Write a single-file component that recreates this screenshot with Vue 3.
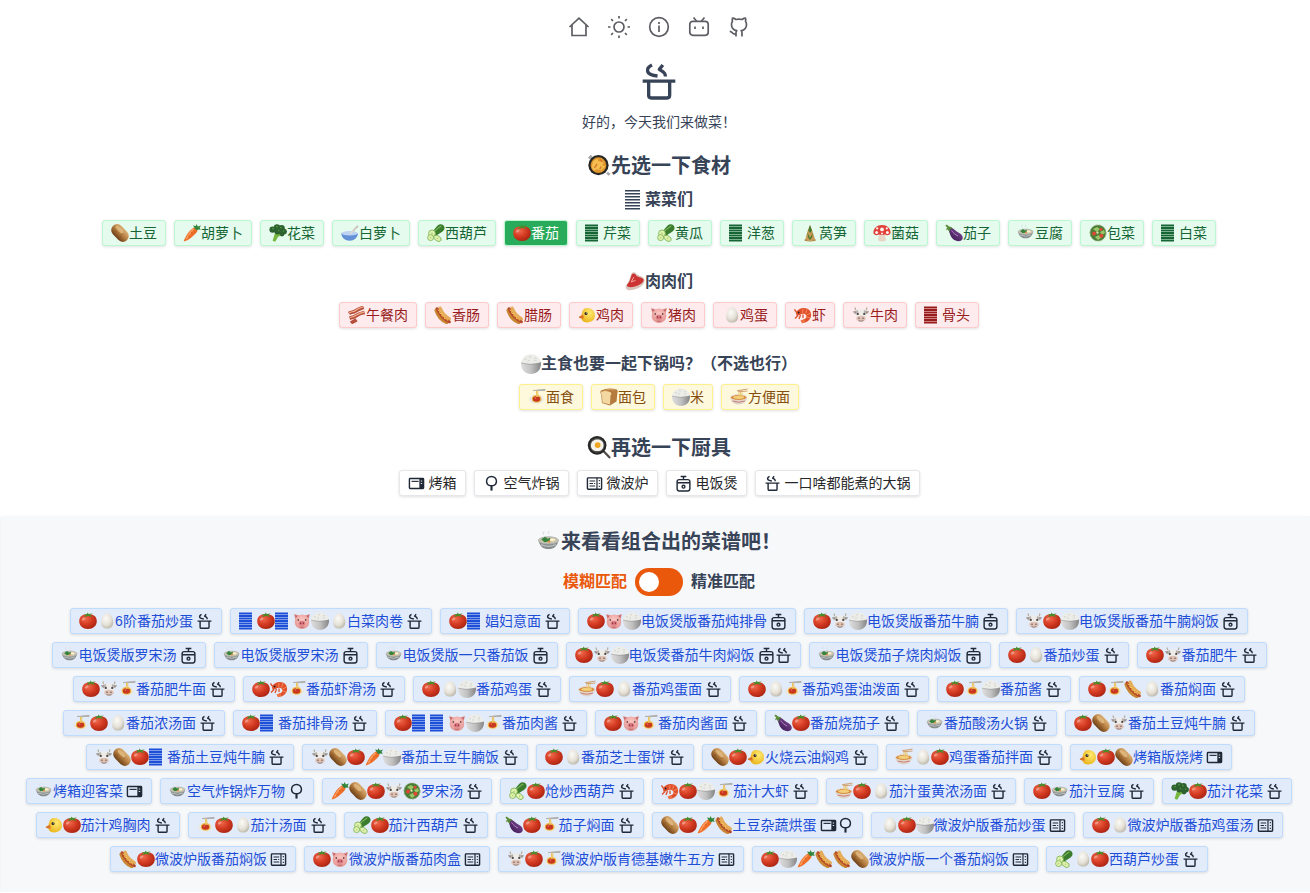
<script setup>
import { ref } from 'vue'

const vegetables = [
  ['potato', '土豆'], ['carrot', '胡萝卜'], ['broccoli', '花菜'], ['spoonbowl', '白萝卜'],
  ['cucumber', '西葫芦'], ['tomato', '番茄'], ['stripe', '芹菜'], ['cucumber', '黄瓜'],
  ['stripe', '洋葱'], ['bamboo', '莴笋'], ['mushroom', '菌菇'], ['eggplant', '茄子'],
  ['soup', '豆腐'], ['salad', '包菜'], ['stripe', '白菜'],
]
const meats = [
  ['bacon', '午餐肉'], ['hotdog', '香肠'], ['hotdog', '腊肠'], ['chick', '鸡肉'], ['pig', '猪肉'],
  ['egg', '鸡蛋'], ['shrimp', '虾'], ['cow', '牛肉'], ['stripe', '骨头'],
]
const staples = [['pasta', '面食'], ['bread', '面包'], ['rice', '米'], ['noodle', '方便面']]
const tools = [
  ['oven', '烤箱'], ['fryer', '空气炸锅'], ['microwave', '微波炉'], ['cooker', '电饭煲'],
  ['pot', '一口啥都能煮的大锅'],
]

const recipes = [
  ['tomato egg', '6阶番茄炒蛋', 'pot'],
  ['stripe tomato stripe pig rice egg', '白菜肉卷', 'pot'],
  ['tomato stripe', '娼妇意面', 'pot'],
  ['tomato pig rice', '电饭煲版番茄炖排骨', 'cooker'],
  ['tomato cow rice', '电饭煲版番茄牛腩', 'cooker'],
  ['cow tomato rice', '电饭煲版番茄牛腩焖饭', 'cooker'],
  ['soup', '电饭煲版罗宋汤', 'cooker'],
  ['soup', '电饭煲版罗宋汤', 'cooker'],
  ['soup', '电饭煲版一只番茄饭', 'cooker'],
  ['tomato cow rice', '电饭煲番茄牛肉焖饭', 'cooker pot'],
  ['soup', '电饭煲茄子烧肉焖饭', 'cooker'],
  ['tomato egg', '番茄炒蛋', 'pot'],
  ['tomato cow', '番茄肥牛', 'pot'],
  ['tomato cow pasta', '番茄肥牛面', 'pot'],
  ['tomato shrimp pasta', '番茄虾滑汤', 'pot'],
  ['tomato egg rice', '番茄鸡蛋', 'pot'],
  ['noodle tomato egg', '番茄鸡蛋面', 'pot'],
  ['tomato egg pasta', '番茄鸡蛋油泼面', 'pot'],
  ['tomato pasta rice', '番茄酱', 'pot'],
  ['tomato pasta hotdog egg', '番茄焖面', 'pot'],
  ['pasta tomato egg', '番茄浓汤面', 'pot'],
  ['tomato stripe', '番茄排骨汤', 'pot'],
  ['tomato stripe stripe pig rice pasta', '番茄肉酱', 'pot'],
  ['tomato pig pasta', '番茄肉酱面', 'pot'],
  ['eggplant tomato', '番茄烧茄子', 'pot'],
  ['soup', '番茄酸汤火锅', 'pot'],
  ['tomato potato cow', '番茄土豆炖牛腩', 'pot'],
  ['cow potato tomato stripe', '番茄土豆炖牛腩', 'pot'],
  ['cow potato tomato carrot rice', '番茄土豆牛腩饭', 'pot'],
  ['tomato egg', '番茄芝士蛋饼', 'pot'],
  ['potato tomato chick', '火烧云油焖鸡', 'pot'],
  ['noodle egg tomato', '鸡蛋番茄拌面', 'pot'],
  ['chick tomato potato', '烤箱版烧烤', 'oven'],
  ['soup', '烤箱迎客菜', 'oven'],
  ['soup', '空气炸锅炸万物', 'fryer'],
  ['carrot potato tomato cow salad', '罗宋汤', 'pot'],
  ['cucumber tomato', '炝炒西葫芦', 'pot'],
  ['shrimp tomato rice pasta', '茄汁大虾', 'pot'],
  ['noodle tomato egg', '茄汁蛋黄浓汤面', 'pot'],
  ['tomato soup', '茄汁豆腐', 'pot'],
  ['broccoli tomato', '茄汁花菜', 'pot'],
  ['chick tomato', '茄汁鸡胸肉', 'pot'],
  ['pasta tomato egg', '茄汁汤面', 'pot'],
  ['cucumber tomato', '茄汁西葫芦', 'pot'],
  ['eggplant tomato pasta', '茄子焖面', 'pot'],
  ['potato tomato carrot hotdog', '土豆杂蔬烘蛋', 'oven fryer'],
  ['egg tomato rice', '微波炉版番茄炒蛋', 'microwave'],
  ['tomato egg', '微波炉版番茄鸡蛋汤', 'microwave'],
  ['hotdog tomato', '微波炉版番茄焖饭', 'microwave'],
  ['tomato pig', '微波炉版番茄肉盒', 'microwave'],
  ['cow tomato pasta', '微波炉版肯德基嫩牛五方', 'microwave'],
  ['tomato rice carrot hotdog hotdog potato', '微波炉版一个番茄焖饭', 'microwave'],
  ['cucumber egg tomato', '西葫芦炒蛋', 'pot'],
].map(([foods, name, gear]) => ({ foods: foods.split(' '), name, gear: gear.split(' ') }))

const navLinks = [
  ['home', '首页'], ['sun', '切换主题'], ['info', '关于'], ['bilibili', '哔哩哔哩'], ['github', 'GitHub'],
]

const picked = ref(new Set(['番茄']))
const pickedTool = ref('')
const exact = ref(false)

function toggle(name) {
  const next = new Set(picked.value)
  next.has(name) ? next.delete(name) : next.add(name)
  picked.value = next
}
</script>

<template>
  <svg class="sprite" aria-hidden="true">
    <defs>
      <radialGradient id="g-tomato" cx=".35" cy=".3" r=".8"><stop offset="0" stop-color="#f0694c" /><stop offset=".5" stop-color="#d33a22" /><stop offset="1" stop-color="#a3200f" /></radialGradient>
      <linearGradient id="g-potato" x1="0" y1="0" x2="0" y2="1"><stop offset="0" stop-color="#dcb177" /><stop offset=".5" stop-color="#b47d3f" /><stop offset="1" stop-color="#6d3f18" /></linearGradient>
      <radialGradient id="g-egg" cx=".4" cy=".35" r=".7"><stop offset="0" stop-color="#fbfaf6" /><stop offset=".6" stop-color="#e6e2d9" /><stop offset="1" stop-color="#bcb6a8" /></radialGradient>
      <linearGradient id="g-bowl" x1="0" x2="1"><stop offset="0" stop-color="#dedede" /><stop offset=".5" stop-color="#c2c2c2" /><stop offset="1" stop-color="#858585" /></linearGradient>
      <linearGradient id="g-eggplant" x1="0" y1="1" x2="1" y2="0"><stop offset="0" stop-color="#33124a" /><stop offset="1" stop-color="#84509a" /></linearGradient>
      <radialGradient id="g-chick" cx=".6" cy=".35" r=".7"><stop offset="0" stop-color="#ffea70" /><stop offset="1" stop-color="#ebb51e" /></radialGradient>
      <radialGradient id="g-pig" cx=".5" cy=".35" r=".7"><stop offset="0" stop-color="#fbc9c4" /><stop offset="1" stop-color="#e28f8c" /></radialGradient>
    </defs>

    <symbol id="f-tomato" viewBox="0 0 18 18">
      <path d="M9 2.800c5.200-1 8.800 1.800 8.800 6.500 0 4.500-3.700 7.700-8.800 7.700S.2 13.800.2 9.300c0-4.700 3.600-7.500 8.800-6.500z" fill="url(#g-tomato)" />
      <path d="M9 4 4.400 5.200 7 3 4.200 2.200l3.800-.2L8.400.4l1.400 1.600 4-.4L11.200 3l2.600 2z" fill="#4d8a2c" />
      <ellipse cx="4.600" cy="7" rx="2" ry="1.100" fill="#fff" opacity=".35" transform="rotate(-35 4.600 7)" />
    </symbol>
    <symbol id="f-potato" viewBox="0 0 18 18">
      <rect x="-1" y="3" width="20" height="12" rx="6" transform="rotate(46 9 9)" fill="url(#g-potato)" />
      <ellipse cx="8.600" cy="5.600" rx="5" ry="1.800" transform="rotate(44 8.600 5.600)" fill="#edcb95" opacity=".6" />
      <g fill="#6d421b"><circle cx="4.600" cy="7" r=".4" /><circle cx="11" cy="10" r=".4" /><circle cx="9.600" cy="13" r=".4" /></g>
    </symbol>
    <symbol id="f-carrot" viewBox="0 0 18 18">
      <path d="M11 3.600c2-.4 4 1.800 3.200 3.800C12.500 10.600 5 16.600.6 17.600 2.600 12 7 5.400 11 3.600z" fill="#f0702a" />
      <path d="M10.500 5C8 7.200 5 11.600 3.400 15" stroke="#ffa468" stroke-width="1.200" fill="none" />
      <path d="m8 8 1.500 1.200M5.500 12l1.200 1M11.500 7.600l1 1.400" stroke="#bb4b12" stroke-width=".6" />
      <path d="M12.600 5.400 10 1.600 12.800 2 13.600 0l1.200 2.400L18 1.400l-1.400 2.400 1.200 2-2.800-.4-1 .8z" fill="#31853a" />
    </symbol>
    <symbol id="f-broccoli" viewBox="0 0 18 18">
      <path d="m6 9-2.400 7.800 2.600 1L9 13l5-3-3-3z" fill="#75b83c" />
      <g fill="#2d6230"><circle cx="3.600" cy="5.600" r="3.200" /><circle cx="8" cy="3.400" r="3.200" /><circle cx="12.600" cy="4.200" r="3.200" /><circle cx="15" cy="7.600" r="2.900" /><circle cx="8.600" cy="7.200" r="3.200" /><circle cx="13" cy="10" r="2.400" /></g>
      <g fill="#55913f"><circle cx="4" cy="4.600" r=".9" /><circle cx="8" cy="2.600" r=".9" /><circle cx="12" cy="3.600" r=".9" /><circle cx="9.600" cy="6.600" r=".8" /><circle cx="14.600" cy="7" r=".8" /></g>
    </symbol>
    <symbol id="f-spoonbowl" viewBox="0 0 18 18">
      <path d="m8.500 9.500 6.800-7.300q1.600-1.400 2.100-.2-.4 2.600-2.400 2.600L11 10.400z" fill="#cbbfb8" />
      <ellipse cx="8.600" cy="9.600" rx="8.400" ry="2.500" fill="#bcd3f1" />
      <path d="M.2 9.600C.8 14 4 16.800 8.600 16.800s7.800-2.800 8.400-7.200c-2 2.600-14.800 2.600-16.800 0z" fill="#6490d6" />
      <path d="m9 10 3.500-4" stroke="#e2dbd6" stroke-width="1.400" />
    </symbol>
    <symbol id="f-cucumber" viewBox="0 0 18 18">
      <path d="M4 7.800C8 6.500 9 1.400 12.400.4c3.400-.8 6.200 2.200 4.800 5-1.600 3.200-6 3.800-8.600 7z" fill="#3a7d2f" />
      <path d="M7 7.400C9.600 6 11.600 3 14.400 2" stroke="#80b65a" stroke-width="1.100" fill="none" />
      <g fill="#e2f2b0" stroke="#78b04e" stroke-width=".8"><circle cx="5" cy="9.400" r="3.400" /><circle cx="3.600" cy="13.600" r="3" /><ellipse cx="10.500" cy="14.300" rx="4" ry="2.500" transform="rotate(30 10.500 14.300)" /></g>
      <g fill="#b4d480"><circle cx="5" cy="9.400" r="1" /><circle cx="3.600" cy="13.600" r=".9" /><circle cx="10.500" cy="14.300" r=".9" /></g>
    </symbol>
    <symbol id="f-stripe" viewBox="0 0 18 18">
      <path d="M0 1.500h13M0 4h13M0 6.500h13M0 9h13M0 11.500h13M0 14h13M0 16.500h13" stroke="currentColor" stroke-width="1.800" />
    </symbol>
    <symbol id="f-stripe-thin" viewBox="0 0 20 20">
      <path d="M0 .8h15M0 3.800h15M0 6.800h15M0 9.800h15M0 12.800h15M0 15.800h15M0 18.800h15" stroke="currentColor" stroke-width="1.500" />
    </symbol>
    <symbol id="f-bamboo" viewBox="0 0 18 18">
      <path d="M9 1 6.600 7 4 16.500h10.400L11.400 7z" fill="#c79a55" />
      <path d="M9 1 7.200 6.400 9 9l2-2.600zM6.400 8.200 9 14l3-5.600-1 5 -2 2.600-2-2.800z" fill="#487a31" />
      <path d="M3.600 15.200q5.400 2.600 11 0v1.600q-5.400 1.600-11 0z" fill="#b58443" />
    </symbol>
    <symbol id="f-mushroom" viewBox="0 0 18 18">
      <path d="M6.400 9h5.200l1.500 7.200q-4 2.400-8.200 0z" fill="#e7d6c6" />
      <path d="M.4 9C.4 4 4 1 9 1s8.600 3 8.600 8c-1 2.800-4.200 2.400-5.400 1.600-2 .6-4.400.6-6.400 0C4.600 11.400 1.400 11.800.4 9z" fill="#e04038" />
      <g fill="#fff2ee"><circle cx="9" cy="5.400" r="1.900" /><circle cx="4.200" cy="4.400" r="1.100" /><circle cx="13.800" cy="4.400" r="1.100" /><circle cx="3.600" cy="8.400" r="1.500" /><circle cx="14.400" cy="8.400" r="1.500" /><circle cx="9" cy="9.600" r="1" /></g>
    </symbol>
    <symbol id="f-eggplant" viewBox="0 0 18 18">
      <path d="M4 3.500C8 3 9.600 6.500 13 8.200c4 1.800 5.600 4.800 4.400 7-1.400 2.800-6.400 2.400-9.400-.2C4.600 12 5 8 2.800 5z" fill="url(#g-eggplant)" />
      <path d="M6.500 6.500c2 2.600 3.500 4 6.500 5.500" stroke="#b88bc7" stroke-width=".9" fill="none" />
      <path d="M.4 1.800 1.800.4 4 2.400q2.600 0 3.800 2.400-1.800-.4-2.600 0 .2 1.600-.4 3.200-.8-1.800-2-2.400-1 .2-1.400 1-.6-2 .8-3.200z" fill="#5a8b36" />
    </symbol>
    <symbol id="f-soup" viewBox="0 0 18 18">
      <path d="M5 3.500q-1-1.300.4-2.600M9 3q-1-1.200.2-2.300" stroke="#d5d9da" stroke-width=".7" fill="none" />
      <path d="M1.200 8C2 12 4.500 14.300 8.600 14.300S15.200 12 16 8z" fill="#858b8b" />
      <path d="M3 11q5.500 2.600 11.200 0" stroke="#bcc1c0" fill="none" />
      <ellipse cx="8.600" cy="7.800" rx="7.500" ry="2.700" fill="#cbc5b0" stroke="#a9adaa" stroke-width=".7" />
      <path d="M3.200 7.200 6 5 8 6.600 10 5.800l-.6 2.600-3.700.8z" fill="#35823b" />
      <ellipse cx="11.600" cy="7.400" rx="2" ry="1.100" fill="#fff0c5" /><circle cx="9" cy="8.700" r=".9" fill="#e48b42" />
    </symbol>
    <symbol id="f-salad" viewBox="0 0 18 18">
      <circle cx="9" cy="9" r="8" fill="#4c7d38" /><circle cx="9" cy="9" r="8" fill="none" stroke="#8bab73" stroke-width="1" stroke-dasharray="2 1.500" />
      <path d="m4 5 4-2 3 2-3 3zM11 8l4-2 1 3-3 2zM6 13l4-2 2 3-3 2z" fill="#9ac667" />
      <g fill="#e04735"><circle cx="5" cy="9.400" r="2" /><circle cx="12" cy="5.300" r="1.500" /><circle cx="12.400" cy="11.800" r="2" /></g><circle cx="8.500" cy="8.700" r="1.100" fill="#f4e6b6" />
    </symbol>
    <symbol id="f-bacon" viewBox="0 0 18 18">
      <g fill="none"><path d="M1 7.500c2.500-2 4-.5 6.500-2.500S12 2.500 15.600 1.300M1.600 12.200c3-1 4.400-.8 7-2.700s4.400-2.100 8-3.100M3 17c2-1.800 3-1.400 5.500-3.300" stroke="#b54f3b" stroke-width="3.600" /><path d="M1 7c2.500-2 4-.5 6.500-2.500S12 2 15.400.8M1.600 11.700c3-1 4.400-.8 7-2.700s4.400-2.100 8-3.100" stroke="#f1ae8b" stroke-width="1.200" /></g>
    </symbol>
    <symbol id="f-hotdog" viewBox="0 0 18 18">
      <g fill="none" stroke-linecap="round"><path d="M3 4.500c1.500 4.500 5 9 9.500 11" stroke="#c98534" stroke-width="5" /><path d="M6 2.600c1.500 4 5 8 9 10.400" stroke="#e4ac5b" stroke-width="4" /><path d="M3 2.500C5 8 9.500 13 15.600 16" stroke="#b54a2a" stroke-width="2.600" /><path d="m4 4 2 1.200-.2 2 2.300.6-.2 2.200 2.400.4.200 2.200 2.400.3.800 1.500" stroke="#ffd55a" stroke-width=".9" /></g>
    </symbol>
    <symbol id="f-chick" viewBox="0 0 18 18">
      <path d="M9 2c5 0 8 3.400 8 7.600 0 4-3.200 6.800-8 6.800-3.600 0-5.600-1.800-5.600-4.600C3.400 7 4.500 2 9 2z" fill="url(#g-chick)" />
      <path d="M5.200 8.300.6 11q1.900 2.500 5.400 1.500z" fill="#e88331" /><path d="m1 11.300 4-.5" stroke="#a95217" stroke-width=".6" />
      <circle cx="8" cy="7.500" r="1.500" fill="#2f271c" /><circle cx="8.300" cy="7" r=".5" fill="#fff" />
    </symbol>
    <symbol id="f-pig" viewBox="0 0 18 18">
      <path d="m1 2 5 1.500-3.500 4.400zM17 2l-5 1.500 3.500 4.400z" fill="#df9490" /><path d="m2 3 2.500 1-1.600 2zM16 3l-2.500 1 1.600 2z" fill="#ba5e62" />
      <ellipse cx="9" cy="9.800" rx="7.300" ry="7.200" fill="url(#g-pig)" /><ellipse cx="9" cy="11.300" rx="3.300" ry="2.500" fill="#dc7c84" />
      <g fill="#852f39"><ellipse cx="7.700" cy="11.300" rx=".6" ry="1" /><ellipse cx="10.300" cy="11.300" rx=".6" ry="1" /></g><g fill="#2f2323"><circle cx="5.300" cy="8" r=".8" /><circle cx="12.700" cy="8" r=".8" /></g><path d="M6.800 14.800q2.200 1.200 4.400 0" stroke="#a34a52" stroke-width=".7" fill="none" />
    </symbol>
    <symbol id="f-egg" viewBox="0 0 18 18"><path d="M10 1c3.600 0 6.200 5.200 6.200 9.400 0 3.800-2.600 6.200-6.200 6.200s-5.800-2.400-5.800-6.200C4.200 6.200 6.500 1 10 1z" fill="url(#g-egg)" /></symbol>
    <symbol id="f-shrimp" viewBox="0 0 18 18">
      <path d="M2 7c2-6 11.500-6.500 14-2 3 5.500-.5 10.500-5 11.500l-2-3c3 0 5-3.600 2-5.300C8.600 6.600 5.600 9 2.600 10z" fill="#df512d" />
      <path d="M9 2.600 8.600 7M13 3.200l-1.400 4.200M16.600 7.200l-4 1.600M16 12l-4-1.300" stroke="#ff9461" stroke-width=".8" /><path d="M3 7 .5 3.500M4 9.500l-3 3M6.500 9l-1.500 4M9 8.500v3.500" stroke="#df512d" stroke-width="1.300" fill="none" /><path d="m10.500 13-4 1.400 1.500 2.800 3.500-.8z" fill="#ef7040" /><circle cx="4.600" cy="6.500" r=".9" fill="#281b18" />
    </symbol>
    <symbol id="f-cow" viewBox="0 0 18 18">
      <path d="M4 4C3 3.500 3 2.500 3.400 1.500M14 4c1-.5 1-1.500.6-2.500" stroke="#b7aa96" stroke-width="1.300" fill="none" />
      <path d="M1 5.200 5 5l-1 3Q1.800 7.800 1 5.200zM17 5.200 13 5l1 3q2.200-.2 3-2.800z" fill="#a09690" />
      <path d="M4.200 3.500h9.600l.5 6-1.700 4.500H5.400L3.700 9.500z" fill="#eeece8" /><path d="M4.200 4.500 6 4.200l.4 3.600-2.500 1zM13.800 4.500 12 4.200l-.4 3.600 2.500 1z" fill="#8d8784" opacity=".6" /><ellipse cx="9" cy="12.600" rx="4.700" ry="2.800" fill="#dfc1b5" /><g fill="#302828"><circle cx="5.900" cy="8" r=".9" /><circle cx="12.100" cy="8" r=".9" /><circle cx="7" cy="12.200" r=".6" /><circle cx="11" cy="12.200" r=".6" /></g><path d="M6.500 14.700q2.500 1 5 0" stroke="#6f5e58" stroke-width=".7" fill="none" />
    </symbol>
    <symbol id="f-pasta" viewBox="0 0 18 18">
      <ellipse cx="8.500" cy="11.300" rx="7.300" ry="4.500" fill="#e9e8e3" /><path d="M3.800 10.500C4 8 6 7 8.700 7s4.700 1.400 4.700 4-2.500 3.600-5 3.600-4.900-1.500-4.600-4.100z" fill="#edb846" /><ellipse cx="8.500" cy="11" rx="3.700" ry="2.800" fill="#c83820" /><path d="M8.700 9 8.400 2.500M10 9l-.4-6.500" stroke="#edc45d" stroke-width="1" /><path d="M5 2.600 17.400 1.400M9.500 2.400h7.800" stroke="#a8a6a0" stroke-width=".9" /><circle cx="7.500" cy="10" r=".8" fill="#ef7659" />
    </symbol>
    <symbol id="f-bread" viewBox="0 0 18 18">
      <path d="M1 2.400Q8-.6 16.800 1.400q1.400 1.600.6 3.400l-.9 8.700-6.600 4-8-2.500L1.300 6.600Q-.4 4.300 1 2.400z" fill="#b57a3d" /><path d="M1.200 3.800c3-1.600 8-1 9.800 1 .7.800.3 2-.5 2.600l-.5 9-7.600-2L2 7.200Q.4 5.500 1.200 3.800z" fill="#f3d8a2" /><path d="M4 2.500Q9 .7 15 2" stroke="#d5a05d" fill="none" />
    </symbol>
    <symbol id="f-rice" viewBox="0 0 18 18">
      <path d="M0 9C0 3.800 4 .2 9 .2s9 3.600 9 8.800z" fill="#ecece8" /><path d="M3 5q1-1 2 0M7 3q1-1 2 0m3 1q1-1 2 0M6 6.200q1-1 2 0m4 0q1-1 2 0" stroke="#c4c4be" stroke-width=".6" fill="none" /><path d="M0 7.500q9 2.500 18 0C18.300 14 14.600 17.900 9 17.900S-.3 14 0 7.500z" fill="url(#g-bowl)" /><path d="M.2 8.300q8.800 2.600 17.600 0" fill="none" stroke="#999" stroke-width=".5" />
    </symbol>
    <symbol id="f-noodle" viewBox="0 0 18 18">
      <path d="M.4 9.500C.8 13.500 4 16.500 8.700 16.500S16.600 13.500 17 9.500z" fill="#ded3cd" /><path d="M2.600 13q6 2.500 12.300 0" stroke="#cc7468" stroke-width=".9" fill="none" /><ellipse cx="8.700" cy="9.500" rx="8.200" ry="2.900" fill="#d5883a" stroke="#e7dfd8" stroke-width="1" /><ellipse cx="8.700" cy="9.300" rx="5.800" ry="1.600" fill="#f4d07b" /><path d="M9 9V2.500M10.500 9V2.500M12 9V2" stroke="#edc772" stroke-width=".9" /><path d="m7 2.700 10.500-1.600M8 3.700l9.500-.6" stroke="#cd9a6a" stroke-width=".9" />
    </symbol>
    <symbol id="f-paella" viewBox="0 0 18 18">
      <path d="M1.500 3.500 3.500 1.200M15 14l2 1.600" stroke="#a8a8a8" stroke-width="2" /><circle cx="8.600" cy="8.400" r="7.600" fill="#292725" /><circle cx="8.600" cy="8.400" r="5.900" fill="#df952b" /><path d="m4.600 5.400 3-2 1 2 4 0-1 3 2 1-3 3-3-1-3 1-1-3z" fill="#f4be50" /><path d="m5.600 10.400 2-3M9.600 11.400l1-2M9.600 4.400l2 1.500" stroke="#d4762c" stroke-width="1" />
    </symbol>
    <symbol id="f-pan" viewBox="0 0 18 18">
      <path d="m12.500 11.500 4.300 4.500" stroke="#504b48" stroke-width="1.700" stroke-linecap="round" /><circle cx="7.600" cy="7" r="7" fill="#262626" /><circle cx="7.600" cy="7" r="5.500" fill="#50504d" /><path d="M3 6.500c.5-3 3-4 5-3.800 2.600 0 4.600 2 4.400 4.400 0 2.600-2 4.400-4.600 4.200C4.800 11.300 2.600 9.500 3 6.500z" fill="#f5f3eb" /><circle cx="8" cy="6.800" r="2.200" fill="#efa621" />
    </symbol>
    <symbol id="f-meat" viewBox="0 0 18 18">
      <path d="M5.500 2c1-2 3.200-2.200 4.400-.8C12 4 17.200 3.600 17.600 7.500c.3 4.500-7 8.500-13.200 8.900C.8 16.600-.4 13.400 1.400 11.200 3.800 8.600 4.300 5.200 5.500 2z" fill="#d8c4bb" /><path d="M6 2.500C7 .9 8.500.9 9.400 2.200c2 3.200 7.200 2.200 7.400 5 0 3-6.600 6.200-12 6.500-3 0-3.600-1.400-2.600-2.600C4.400 9 5 5.500 6 2.500z" fill="#cc3433" /><path d="M8 4.500 5.500 9l4-1.500" fill="none" stroke="#f2a49c" stroke-width=".9" />
    </symbol>

    <symbol id="i-pot" viewBox="0 0 24 24">
      <g fill="none" stroke="currentColor" stroke-width="2" stroke-linejoin="round"><path d="M2.200 11.500h19.600M5.800 11.500v8.500q0 1.600 1.600 1.600h9.400q1.600 0 1.600-1.600v-8.500" /><path d="M7.800 1.800C5.600 2.800 4.800 4 5.200 5.700s2.200 2.300 5.900 2.700M14.300 1.800l-2.100 2.600 2.300 1.500q1.300.9 1.400 2.800" /></g>
    </symbol>
    <symbol id="i-oven" viewBox="0 0 24 24">
      <rect x="2" y="5" width="20" height="14" rx="1" fill="none" stroke="currentColor" stroke-width="2" /><path d="M16 5h6v14h-6z" fill="currentColor" /><path d="M5 9h10" stroke="currentColor" stroke-width="1.600" /><path d="M18 8.500h2M18 12h2" stroke="#fff" stroke-width="1.200" />
    </symbol>
    <symbol id="i-fryer" viewBox="0 0 24 24">
      <g fill="none" stroke="currentColor" stroke-width="2"><path d="M9.500 15C6 13.500 5 11 5 9a7 7 0 0 1 14 0c0 2-1 4.500-4.500 6z" /><path d="M12 15v7" stroke-width="3" /></g>
    </symbol>
    <symbol id="i-microwave" viewBox="0 0 24 24">
      <g fill="none" stroke="currentColor" stroke-width="2"><rect x="2" y="4" width="20" height="16" rx="1" /><path d="M15.500 4v16M5 8.500h8M5 12h5M11.500 12H13M5 15.500h8M18 8h1.600M18 12h1.600M18 16h1.600" stroke-width="1.700" /></g>
    </symbol>
    <symbol id="i-cooker" viewBox="0 0 24 24">
      <g fill="none" stroke="currentColor" stroke-width="2"><rect x="3" y="6.500" width="18" height="16" rx="3" /><path d="M3 11h18M12 2v4.500M8 2h8" /><circle cx="12" cy="16.500" r="2" /></g>
    </symbol>

    <symbol id="i-home" viewBox="0 0 24 24"><path d="M2.500 12 12 3.200l9.500 8.800M5 10v10.500h14V10" fill="none" stroke="currentColor" stroke-width="1.700" /></symbol>
    <symbol id="i-sun" viewBox="0 0 24 24"><g fill="none" stroke="currentColor" stroke-width="1.700"><circle cx="12" cy="12" r="5" /><path d="M12 1v2.500M12 20.500V23M1 12h2.500M20.500 12H23M4.200 4.200 6 6M18 18l1.800 1.800M4.200 19.800 6 18M18 6l1.800-1.800" /></g></symbol>
    <symbol id="i-info" viewBox="0 0 24 24"><g fill="none" stroke="currentColor" stroke-width="1.700"><circle cx="12" cy="12" r="9.300" /><path d="M12 10.500V17M12 7v2" /></g></symbol>
    <symbol id="i-bilibili" viewBox="0 0 24 24"><g fill="none" stroke="currentColor" stroke-width="1.700"><rect x="2.800" y="6.300" width="18.400" height="14" rx="3" /><path d="m6.500 2.500 3 3.500M17.500 2.500l-3 3.500M8 11.500V14M16 11.500V14" /></g></symbol>
    <symbol id="i-github" viewBox="0 0 24 24"><g fill="none" stroke="currentColor" stroke-width="1.700" stroke-linejoin="round"><path d="M9 21.500v-3.700c0-1 .2-1.500.8-2.100-3.300-.6-5.300-2.200-5.300-6.200 0-1.500.3-2.400 1-3.300-.4-1-.4-2 0-3 1.400 0 2.500.6 3.400 1.300 1.700-.4 4.500-.4 6.200 0 .9-.7 2-1.300 3.400-1.300.4 1 .4 2 0 3 .7.900 1 1.800 1 3.300 0 4-2 5.600-5.300 6.200.6.600.8 1.100.8 2.100v3.700" /><path d="M9 19c-4.300.8-3-2.500-6.300-2.700" /></g></symbol>
  </svg>

  <div class="page">
    <header class="top">
      <nav class="nav">
        <a v-for="[icon, label] in navLinks" :key="icon" href="#" :aria-label="label">
          <svg class="nav-icon"><use :href="'#i-' + icon" /></svg>
        </a>
      </nav>
      <svg class="brand" aria-hidden="true"><use href="#i-pot" /></svg>
      <p class="hello">好的，今天我们来做菜！</p>
    </header>

    <main>
      <section class="picker">
        <h2><svg class="title-food"><use href="#f-paella" /></svg>先选一下食材</h2>
        <h3><svg class="sub-food"><use href="#f-stripe-thin" /></svg>菜菜们</h3>
        <div class="chips">
          <button v-for="[food, name] in vegetables" :key="name" type="button" class="chip green"
            :class="{ active: picked.has(name) }" :aria-pressed="picked.has(name)" @click="toggle(name)">
            <svg class="food"><use :href="'#f-' + food" /></svg>{{ name }}
          </button>
        </div>
      </section>

      <section class="picker spaced">
        <h3><svg class="sub-food"><use href="#f-meat" /></svg>肉肉们</h3>
        <div class="chips">
          <button v-for="[food, name] in meats" :key="name" type="button" class="chip red"
            :class="{ active: picked.has(name) }" :aria-pressed="picked.has(name)" @click="toggle(name)">
            <svg class="food"><use :href="'#f-' + food" /></svg>{{ name }}
          </button>
        </div>
      </section>

      <section class="picker spaced">
        <h3><svg class="sub-food"><use href="#f-rice" /></svg>主食也要一起下锅吗？（不选也行）</h3>
        <div class="chips">
          <button v-for="[food, name] in staples" :key="name" type="button" class="chip yellow"
            :class="{ active: picked.has(name) }" :aria-pressed="picked.has(name)" @click="toggle(name)">
            <svg class="food"><use :href="'#f-' + food" /></svg>{{ name }}
          </button>
        </div>
      </section>

      <section class="picker spaced">
        <h2><svg class="title-food"><use href="#f-pan" /></svg>再选一下厨具</h2>
        <div class="chips">
          <button v-for="[icon, name] in tools" :key="name" type="button" class="chip tool"
            :class="{ active: pickedTool === name }" :aria-pressed="pickedTool === name"
            @click="pickedTool = pickedTool === name ? '' : name">
            <svg class="gear"><use :href="'#i-' + icon" /></svg>{{ name }}
          </button>
        </div>
      </section>

      <section class="results">
        <h2><svg class="title-food"><use href="#f-soup" /></svg>来看看组合出的菜谱吧！</h2>
        <label class="match">
          <span :class="{ on: !exact }">模糊匹配</span>
          <input v-model="exact" type="checkbox" role="switch" />
          <span :class="{ on: exact }">精准匹配</span>
        </label>
        <div class="chips">
          <a v-for="(recipe, i) in recipes" :key="i" href="#" class="chip blue">
            <svg v-for="(food, n) in recipe.foods" :key="n" class="food"><use :href="'#f-' + food" /></svg>
            <span class="name">{{ recipe.name }}</span>
            <svg v-for="icon in recipe.gear" :key="icon" class="gear"><use :href="'#i-' + icon" /></svg>
          </a>
        </div>
      </section>
    </main>
  </div>
</template>

<style>
body {
  margin: 0;
  background: #fff;
}
</style>

<style scoped>
.sprite {
  position: absolute;
  width: 0;
  height: 0;
}
.page {
  color: #374357;
  font-family: "Liberation Sans", "Noto Sans CJK SC", sans-serif;
  font-size: 14px;
  line-height: 20px;
}
.top {
  display: flex;
  flex-direction: column;
  align-items: center;
  padding: 15px 0 0 8px;
}
.nav {
  display: flex;
  gap: 16px;
}
.nav a {
  display: flex;
  color: #5c5e63;
}
.nav-icon {
  width: 24px;
  height: 24px;
}
.brand {
  width: 40px;
  height: 40px;
  margin-top: 23px;
}
.hello {
  margin: 10px 0 20px;
}
h2,
h3 {
  display: flex;
  align-items: center;
  justify-content: center;
  margin: 0 0 8px;
  font-weight: 600;
}
h2 {
  font-size: 20px;
  line-height: 28px;
}
h3 {
  font-size: 16px;
  line-height: 24px;
}
.title-food {
  width: 24px;
  height: 24px;
}
.sub-food {
  width: 20px;
  height: 20px;
}
.picker {
  padding-left: 8px;
}
.spaced {
  margin-top: 24px;
}
.chips {
  display: flex;
  flex-wrap: wrap;
  justify-content: center;
  gap: 8px;
}
.chip {
  display: flex;
  align-items: center;
  margin: 0;
  padding: 2px 8px;
  border: 1px solid;
  border-radius: 3px;
  box-shadow: 0 1px 3px rgba(0, 0, 0, 0.12);
  font: inherit;
  white-space: nowrap;
  text-decoration: none;
  cursor: pointer;
}
.food {
  width: 18px;
  height: 18px;
}
.gear {
  width: 17px;
  height: 17px;
  color: #1f2937;
}
.green {
  background: #e4fbee;
  border-color: #bbf7d0;
  color: #166534;
}
.green.active {
  background: #28ab5a;
  border-color: #bbf7d0;
  color: #fff;
}
.red {
  background: #fdebed;
  border-color: #fecaca;
  color: #991b1b;
}
.red.active {
  background: #dc2626;
  color: #fff;
}
.yellow {
  background: #fef8dc;
  border-color: #fef08a;
  color: #854d0e;
}
.yellow.active {
  background: #ca8a04;
  color: #fff;
}
.tool {
  gap: 4px;
  background: #fff;
  border-color: #e5e7eb;
  color: #27272a;
}
.tool.active {
  background: #e5e7eb;
}
.blue {
  background: #e2ebf9;
  border-color: #bfdbfe;
  color: #1d4ed8;
}
.blue .name {
  margin-right: 3px;
}
.results {
  margin: 20px 0 0 1px;
  padding: 12px 14px 20px 21px;
  background: #f7f8fa;
  box-shadow: 0 1px 2px rgba(0, 0, 0, 0.12);
}
.results h2 {
  margin-bottom: 12px;
}
.match {
  display: flex;
  align-items: center;
  justify-content: center;
  gap: 8px;
  margin-bottom: 12px;
  font-size: 16px;
  font-weight: 600;
}
.match .on {
  color: #ea580c;
}
.match input {
  display: flex;
  align-items: center;
  box-sizing: border-box;
  width: 48px;
  height: 28px;
  margin: 0;
  padding: 4px;
  appearance: none;
  border-radius: 14px;
  background: #ea580c;
  cursor: pointer;
}
.match input::before {
  content: "";
  width: 20px;
  height: 20px;
  border-radius: 50%;
  background: #fff;
}
.match input:checked::before {
  margin-left: auto;
}
</style>
